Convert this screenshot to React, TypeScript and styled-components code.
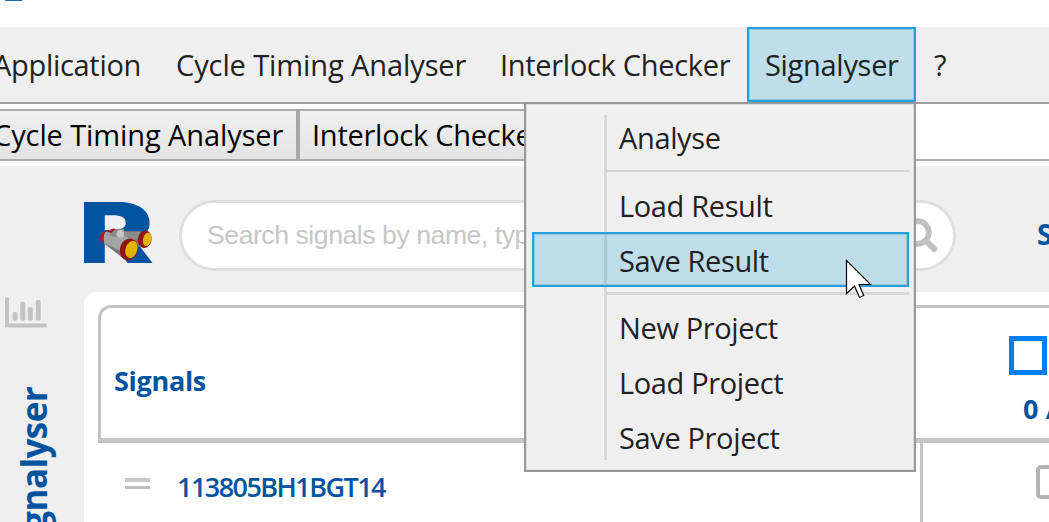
import React from "react";
import styled, { createGlobalStyle } from "styled-components";

const Global = createGlobalStyle`
  * { box-sizing: border-box; }
  body { margin: 0; background: #fff; font-family: "Open Sans", "Noto Sans", sans-serif; }
  svg { flex: none; }
`;

const Window = styled.div`
  position: relative;
  width: 1049px;
  height: 522px;
  overflow: hidden;
  background: #fff;
  display: flex;
  flex-direction: column;
`;

const TitleBar = styled.div`
  height: 27px;
  flex: none;
  padding-left: 5px;
`;

const WindowIcon = styled.div`
  width: 17px;
  height: 1px;
  background: #1f66a8;
`;

const MenuBar = styled.nav`
  height: 77px;
  flex: none;
  display: flex;
  background: #efefef;
  border-bottom: 2px solid #a0a0a0;
`;

const MenuItem = styled.div<{ $w: number; $active?: boolean; $ls?: number; $pad?: number }>`
  width: ${(p) => p.$w}px;
  height: 75px;
  flex: none;
  padding-left: ${(p) => p.$pad ?? 16}px;
  line-height: 72px;
  border: 2px solid ${(p) => (p.$active ? "#26a0da" : "transparent")};
  background: ${(p) => (p.$active ? "#c0ddea" : "transparent")};
  background-clip: padding-box;
  box-shadow: ${(p) => (p.$active ? "inset 0 0 0 1px #93c9e4" : "none")};
  font-size: 29px;
  letter-spacing: ${(p) => p.$ls ?? 0}px;
  color: #212121;
  white-space: nowrap;
`;

const TabStrip = styled.div`
  height: 52px;
  margin-top: 5px;
  flex: none;
  display: flex;
  border-bottom: 2px solid #ababab;
`;

const Tab = styled.div<{ $w: number; $pad: number; $ls: number }>`
  width: ${(p) => p.$w}px;
  flex: none;
  height: 50px;
  padding-left: ${(p) => p.$pad}px;
  border-top: 2px solid #ababab;
  border-right: 4px solid #a8a8a8;
  background: linear-gradient(#f0f0f0, #e4e4e4);
  font-size: 29px;
  line-height: 48px;
  letter-spacing: ${(p) => p.$ls}px;
  color: #000;
  white-space: nowrap;
`;

const TabText = styled.span<{ $shift?: number }>`
  display: inline-block;
  margin-left: ${(p) => p.$shift ?? 0}px;
`;

const Body = styled.main`
  flex: 1;
  min-height: 0;
  margin-top: 5px;
  display: flex;
  background: #efefef;
`;

const SideBar = styled.aside`
  width: 84px;
  flex: none;
  padding: 130px 0 0 4px;
  display: flex;
  flex-direction: column;
  align-items: flex-start;
`;

const SideLabel = styled.div`
  flex: none;
  margin: 58px 0 0 6px;
  writing-mode: vertical-rl;
  transform: rotate(180deg);
  font-size: 35px;
  line-height: 48px;
  font-weight: 700;
  letter-spacing: -0.6px;
  color: #00549f;
`;

const Content = styled.section`
  flex: 1;
  min-width: 0;
  display: flex;
  flex-direction: column;
`;

const Header = styled.header`
  height: 126px;
  flex: none;
  display: flex;
  align-items: flex-start;
  padding-top: 34px;
`;

const SearchBox = styled.div`
  width: 777px;
  height: 71px;
  flex: none;
  margin-left: 25px;
  padding: 0 14px 0 25px;
  display: flex;
  align-items: center;
  justify-content: space-between;
  border: 3px solid #dedede;
  border-radius: 36px;
  background: #fff;
  font-family: "Liberation Sans", Arial, sans-serif;
  font-size: 26.6px;
  letter-spacing: -0.45px;
  color: #c6c6c6;
`;

const HeaderText = styled.div`
  margin: 14px 0 0 81px;
  font-size: 28px;
  line-height: 40px;
  font-weight: 700;
  color: #00549f;
  white-space: nowrap;
`;

const Panel = styled.div`
  flex: 1;
  min-height: 0;
  padding: 13px 0 0 14px;
  border-top-left-radius: 12px;
  background: #fff;
`;

const HeadRow = styled.div`
  height: 138px;
  display: flex;
  border: 3px solid #c4c4c4;
  border-right: 0;
  border-bottom-width: 5px;
  border-top-left-radius: 13px;
`;

const HeadCell = styled.div`
  width: 822px;
  flex: none;
  padding: 53px 0 0 13px;
  font-size: 27px;
  line-height: 40px;
  font-weight: 700;
  letter-spacing: -0.3px;
  color: #00549f;
`;

const CheckCell = styled.div`
  padding: 28px 0 0 86px;
  color: #00549f;
  font-size: 27px;
  font-weight: 700;
  line-height: 40px;
  white-space: nowrap;
`;

const BlueCheck = styled.div`
  width: 38px;
  height: 39px;
  border: 5px solid #0080f0;
`;

const Count = styled.div`
  margin: 14px 0 0 14px;
`;

const Row = styled.div`
  height: 88px;
  display: flex;
`;

const NameCell = styled.div`
  width: 825px;
  flex: none;
  display: flex;
  align-items: flex-start;
  padding: 24px 0 0 27px;
  border-right: 3px solid #c4c4c4;
  font-size: 27px;
  line-height: 40px;
  font-weight: 600;
  letter-spacing: -1.55px;
  color: #00549f;
`;

const Grip = styled.div`
  width: 25px;
  height: 11px;
  flex: none;
  margin: 11px 27px 0 0;
  border-top: 4px solid #c8c8c8;
  border-bottom: 3px solid #c0c0c0;
`;

const GreyCheck = styled.div`
  width: 34px;
  height: 34px;
  margin: 22px 0 0 113px;
  flex: none;
  border: 4px solid #b4b4b4;
  border-radius: 5px;
`;

const Popup = styled.div`
  position: absolute;
  left: 524px;
  top: 102px;
  width: 392px;
  height: 370px;
  padding: 6px 5px 0 6px;
  background: #efefef;
  border: 2px solid #999;
  box-shadow: inset 0 0 0 1px #dedede;
`;

const Gutter = styled.div`
  position: absolute;
  left: 78px;
  top: 11px;
  width: 3px;
  height: 345px;
  background: #d7d7d7;
`;

const PopupItem = styled.div<{ $active?: boolean; $lh?: number }>`
  position: relative;
  height: 55px;
  padding-left: 85px;
  border: 2px solid ${(p) => (p.$active ? "#26a0da" : "transparent")};
  background: ${(p) => (p.$active ? "rgba(38, 160, 218, 0.24)" : "transparent")};
  box-shadow: ${(p) => (p.$active ? "inset 0 0 0 1px #93c9e4" : "none")};
  font-size: 29px;
  line-height: ${(p) => p.$lh ?? 53}px;
  letter-spacing: -0.36px;
  color: #212121;
  white-space: nowrap;
`;

const Separator = styled.div<{ $before: number; $after: number; $h: number }>`
  height: ${(p) => p.$h}px;
  margin: ${(p) => p.$before}px 0 ${(p) => p.$after}px 75px;
  background: #d7d7d7;
`;

const Pointer = styled.svg`
  position: absolute;
  left: 845px;
  top: 258px;
`;

const Logo = () => (
  <svg width="70" height="64" viewBox="0 0 70 64">
    <text
      x="0"
      y="0"
      transform="translate(-7.6 63) scale(1.38 1)"
      fontFamily="Inter, sans-serif"
      fontWeight="900"
      fontSize="84"
      fill="#00549f"
    >
      R
    </text>
    <g transform="translate(0.2 1.4)">
      <path d="M30 30 55 30 57 45 40 46z" fill="#777" />
      <path d="M18 31 29 29 51 37 40 58 20 42z" fill="#a5a4a5" />
      <path d="M29 30 57 30 55 37 48 38z" fill="#8c8c8c" />
      <path d="M20 42 36 54 40 58 38 50z" fill="#777" />
      <path d="M17 32 22 29Q18 35 20 42L17 40Q15 36 17 32z" fill="#b51219" />
      <path d="M22 30 29 27 34 28 28 32z" fill="#9f1c1c" />
      <path d="M24 34 31 28 39 27 42 32 35 36z" fill="#888" />
      <circle cx="36" cy="32.5" r="3.8" fill="#c6c6c6" />
      <ellipse cx="44.6" cy="48" rx="8.8" ry="11" transform="rotate(16 45 48)" fill="#8f1513" />
      <ellipse cx="47.2" cy="48" rx="5.8" ry="8.8" transform="rotate(18 47 48)" fill="#e2b400" />
      <ellipse cx="60.6" cy="38" rx="6.8" ry="8.8" transform="rotate(10 61 38)" fill="#8f1513" />
      <ellipse cx="63" cy="38" rx="4.2" ry="6.8" transform="rotate(13 63 38)" fill="#e2b400" />
    </g>
  </svg>
);

const ChartIcon = () => (
  <svg width="44" height="33" viewBox="0 0 44 33" fill="#c3c3c3">
    <path d="M1 1.5H5V27.5H42.5V31.5H1z" />
    <rect x="8.5" y="16" width="5" height="8.5" rx="1.6" />
    <rect x="16.2" y="6" width="5" height="18.5" rx="1.6" />
    <rect x="23.8" y="11" width="5" height="13.5" rx="1.6" />
    <rect x="31.8" y="4" width="5" height="20.5" rx="1.6" />
  </svg>
);

const SearchIcon = () => (
  <svg width="40" height="36" viewBox="0 0 40 36" fill="none" stroke="#c0c0c0">
    <circle cx="18.5" cy="14.5" r="11.3" strokeWidth="5.8" />
    <path d="M26.5 22.5 35.3 31" strokeWidth="6" strokeLinecap="round" />
  </svg>
);

export default function App() {
  return (
    <>
      <Global />
      <Window>
        <TitleBar>
          <WindowIcon />
        </TitleBar>
        <MenuBar>
          <MenuItem $w={159} $pad={0} $ls={-0.3}>
            <TabText $shift={-9}>Application</TabText>
          </MenuItem>
          <MenuItem $w={325} $pad={15} $ls={-0.1}>Cycle Timing Analyser</MenuItem>
          <MenuItem $w={263} $pad={14} $ls={-0.3}>Interlock Checker</MenuItem>
          <MenuItem $w={169} $active $ls={-0.3}>Signalyser</MenuItem>
          <MenuItem $w={60}>?</MenuItem>
        </MenuBar>
        <TabStrip>
          <Tab $w={300} $pad={0} $ls={-0.1}>
            <TabText $shift={-7}>Cycle Timing Analyser</TabText>
          </Tab>
          <Tab $w={260} $pad={12} $ls={-0.25}>Interlock Checker</Tab>
        </TabStrip>
        <Body>
          <SideBar>
            <ChartIcon />
            <SideLabel>Signalyser</SideLabel>
          </SideBar>
          <Content>
            <Header>
              <Logo />
              <SearchBox>
                <span>Search signals by name, type</span>
                <SearchIcon />
              </SearchBox>
              <HeaderText>S</HeaderText>
            </Header>
            <Panel>
              <HeadRow>
                <HeadCell>Signals</HeadCell>
                <CheckCell>
                  <BlueCheck />
                  <Count>0 /</Count>
                </CheckCell>
              </HeadRow>
              <Row>
                <NameCell>
                  <Grip />
                  113805BH1BGT14
                </NameCell>
                <GreyCheck />
              </Row>
            </Panel>
          </Content>
        </Body>
        <Popup>
          <Gutter />
          <PopupItem $lh={52}>Analyse</PopupItem>
          <Separator $before={5} $after={5} $h={2} />
          <PopupItem>Load Result</PopupItem>
          <PopupItem $active>Save Result</PopupItem>
          <Separator $before={5} $after={5} $h={3} />
          <PopupItem $lh={52}>New Project</PopupItem>
          <PopupItem $lh={52}>Load Project</PopupItem>
          <PopupItem $lh={52}>Save Project</PopupItem>
        </Popup>
        <Pointer width="28" height="42" viewBox="0 0 28 42">
          <path
            d="M1.5 2.5V35.5L9.5 28 14.5 39.5 18.7 37.5 14 26.5H25.5z"
            fill="#fff"
            stroke="#000"
            strokeWidth="1.2"
          />
        </Pointer>
      </Window>
    </>
  );
}
